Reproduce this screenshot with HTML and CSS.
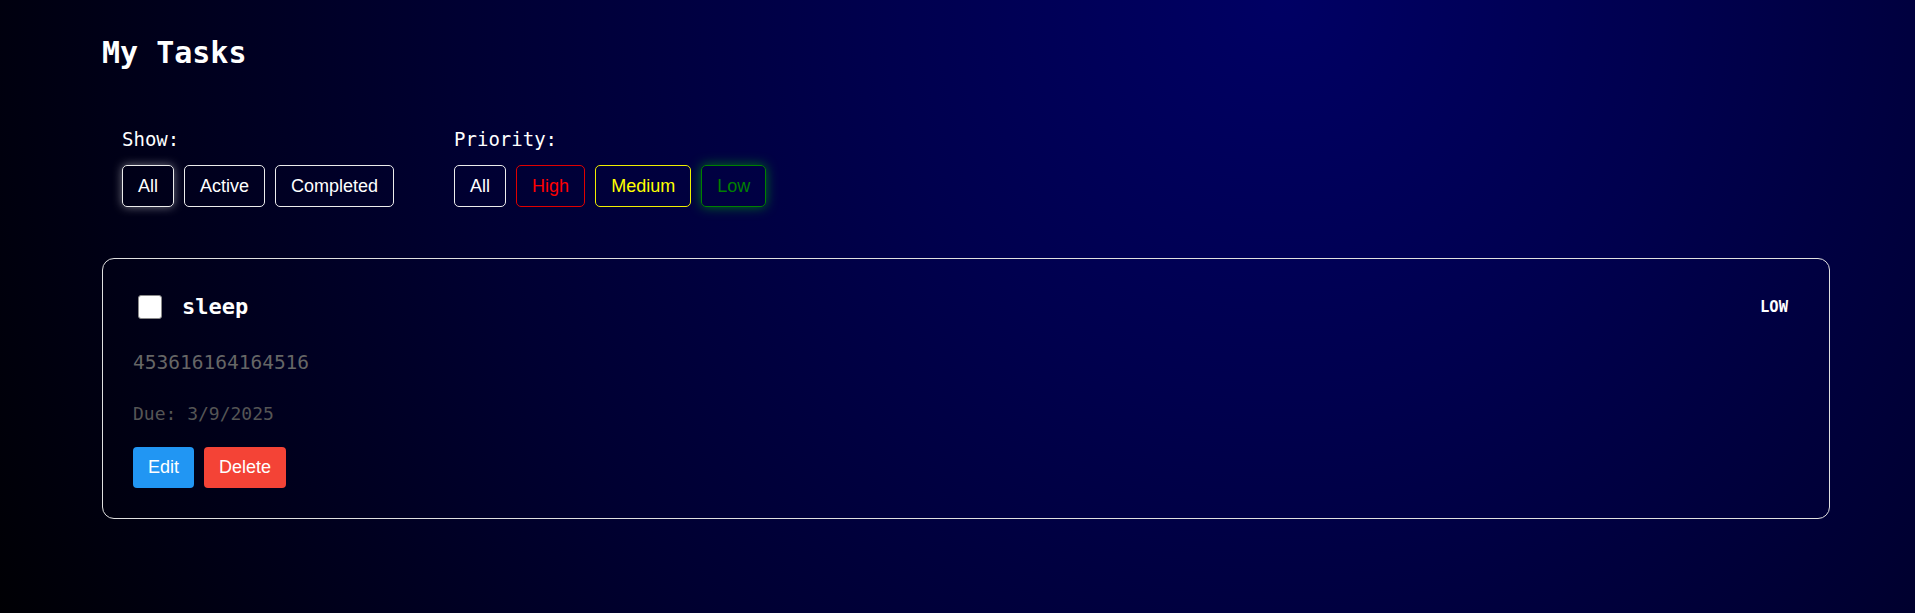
FILE: index.html
```html
<!DOCTYPE html>
<html lang="en">
<head>
<meta charset="utf-8">
<title>My Tasks</title>
<link rel="stylesheet" href="styles.css">
</head>
<body>
<div class="app">
  <h1 class="title">My Tasks</h1>
  <div class="filters">
    <div class="filter-group">
      <span class="filter-label">Show:</span>
      <div class="filter-buttons">
        <button class="fbtn fbtn-white active-white">All</button>
        <button class="fbtn fbtn-white">Active</button>
        <button class="fbtn fbtn-white">Completed</button>
      </div>
    </div>
    <div class="filter-group">
      <span class="filter-label">Priority:</span>
      <div class="filter-buttons">
        <button class="fbtn fbtn-white">All</button>
        <button class="fbtn fbtn-high">High</button>
        <button class="fbtn fbtn-medium">Medium</button>
        <button class="fbtn fbtn-low active-green">Low</button>
      </div>
    </div>
  </div>
  <div class="task-card">
    <div class="task-header">
      <div class="task-main">
        <span class="checkbox"></span>
        <h3 class="task-title">sleep</h3>
      </div>
      <span class="badge">LOW</span>
    </div>
    <p class="task-desc">453616164164516</p>
    <p class="task-due">Due: 3/9/2025</p>
    <div class="task-actions">
      <button class="abtn abtn-edit">Edit</button>
      <button class="abtn abtn-delete">Delete</button>
    </div>
  </div>
</div>
</body>
</html>
```
FILE: styles.css
```css
html, body {
  margin: 0;
  height: 100%;
}
body {
  background: radial-gradient(circle farthest-corner at 67% 0%, #000064 0%, #00004e 28%, #000032 58%, #000004 100%);
  background-color: #000010;
  color: #fff;
  font-family: "DejaVu Sans Mono", monospace;
  overflow: hidden;
}
.app {
  padding: 35px 85px 0 102px;
}
.title {
  margin: 0;
  font-size: 30px;
  line-height: 36px;
  font-weight: bold;
}
.filters {
  display: flex;
  gap: 60px;
  margin-top: 37px;
  padding: 20px;
}
.filter-group {
  display: flex;
  flex-direction: column;
}
.filter-label {
  font-size: 19px;
  line-height: 22px;
  margin-bottom: 15px;
}
.filter-buttons {
  display: flex;
  gap: 10px;
}
.fbtn {
  font-family: "Liberation Sans", Arial, sans-serif;
  font-size: 18px;
  line-height: 20px;
  padding: 10px 15px;
  background: transparent;
  border: 1px solid #ececec;
  border-radius: 5px;
  color: #fff;
}
.fbtn-high {
  border-color: #e00000;
  color: #ff0000;
}
.fbtn-medium {
  border-color: #f0f000;
  color: #ffff00;
}
.fbtn-low {
  border-color: #008000;
  color: #008000;
}
.active-white {
  box-shadow: 0 0 10px rgba(255, 255, 255, 0.45);
}
.active-green {
  box-shadow: 0 0 12px rgba(0, 200, 0, 0.55);
}
.task-card {
  margin-top: 31px;
  border: 1px solid #e0e0e0;
  border-radius: 12px;
  padding: 30px;
}
.task-header {
  display: flex;
  align-items: center;
  justify-content: space-between;
  min-height: 36px;
}
.task-main {
  display: flex;
  align-items: center;
}
.checkbox {
  width: 22px;
  height: 22px;
  margin-left: 5px;
  background: #fff;
  border: 1px solid #8a8a8a;
  border-radius: 3px;
}
.task-title {
  margin: 0 0 0 20px;
  font-size: 22px;
  line-height: 26px;
  font-weight: bold;
}
.badge {
  font-size: 15.5px;
  font-weight: bold;
  padding: 4px 11px;
}
.task-desc {
  margin: 27px 0 0;
  font-size: 19.5px;
  line-height: 22px;
  color: #666;
}
.task-due {
  margin: 29px 0 0;
  font-size: 18px;
  line-height: 21px;
  color: #555;
}
.task-actions {
  display: flex;
  gap: 10px;
  margin-top: 23px;
}
.abtn {
  font-family: "Liberation Sans", Arial, sans-serif;
  font-size: 18px;
  line-height: 21px;
  padding: 10px 15px;
  border: none;
  border-radius: 4px;
  color: #fff;
}
.abtn-edit {
  background: #2196f3;
}
.abtn-delete {
  background: #f44336;
}
```
